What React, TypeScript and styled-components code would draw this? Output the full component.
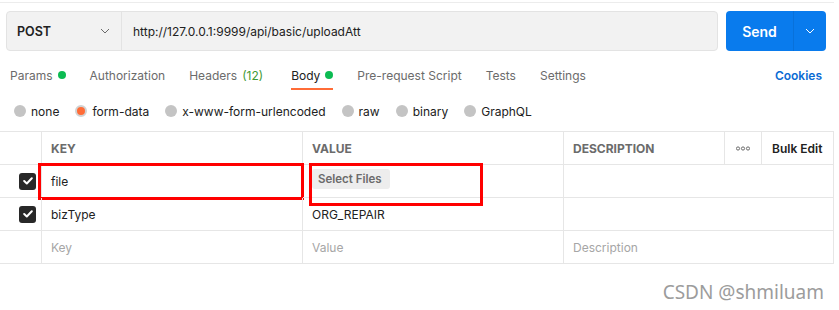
import React from 'react';
import styled, { createGlobalStyle } from 'styled-components';

const GlobalStyle = createGlobalStyle`
  body {
    margin: 0;
    background: #ffffff;
    font-family: Inter, "Noto Sans", sans-serif;
    font-size: 12px;
    color: #212121;
  }
`;

const Shell = styled.div`
  padding-top: 2px;
  width: 839px;
`;

const Panel = styled.div`
  width: 834px;
  border-top: 1px solid #ececec;
`;

const RequestBar = styled.div`
  display: flex;
  gap: 8px;
  padding: 8px 8px 0 6px;
`;

const UrlGroup = styled.div`
  flex: 1;
  display: flex;
  height: 40px;
  box-sizing: border-box;
  background: #f2f2f2;
  border: 1px solid #e3e3e3;
  border-radius: 4px;
`;

const MethodSelect = styled.div`
  width: 115px;
  box-sizing: border-box;
  display: flex;
  align-items: center;
  justify-content: space-between;
  padding: 0 11px 0 10px;
  border-right: 1px solid #e3e3e3;
  font-size: 12.5px;
  font-weight: 600;
  color: #212121;
`;

const UrlText = styled.div`
  display: flex;
  align-items: center;
  padding-left: 11px;
  color: #212121;
`;

const SendButton = styled.div`
  width: 100px;
  height: 40px;
  display: flex;
  background: #097bed;
  border-radius: 4px;
  color: #ffffff;
`;

const SendLabel = styled.div`
  width: 67px;
  display: flex;
  align-items: center;
  justify-content: center;
  font-size: 14px;
  font-weight: 600;
  border-right: 1px solid rgba(0, 0, 0, 0.08);
`;

const SendMore = styled.div`
  flex: 1;
  display: flex;
  align-items: center;
  justify-content: center;
`;

const TabRow = styled.div`
  display: flex;
  align-items: flex-end;
  margin-top: 12px;
  padding: 0 12px 0 10px;
`;

const Tab = styled.div<{ $active?: boolean; $gap?: number }>`
  display: flex;
  align-items: center;
  gap: 5px;
  height: 24px;
  padding-bottom: 1px;
  margin-right: ${({ $gap }) => $gap ?? 24}px;
  border-bottom: 2px solid ${({ $active }) => ($active ? '#ff6c37' : 'transparent')};
  color: ${({ $active }) => ($active ? '#212121' : '#6b6b6b')};
`;

const Count = styled.span`
  color: #3f9a36;
`;

const Dot = styled.span`
  width: 8px;
  height: 8px;
  border-radius: 50%;
  background: #0cbb52;
`;

const CookiesLink = styled.div`
  margin-left: auto;
  height: 24px;
  padding-bottom: 3px;
  display: flex;
  align-items: center;
  color: #0b6bd4;
  font-weight: 600;
`;

const RadioRow = styled.div`
  display: flex;
  align-items: center;
  height: 22px;
  margin-top: 10px;
  padding-left: 14px;
`;

const RadioOption = styled.label`
  display: flex;
  align-items: center;
  gap: 5px;
  margin-right: 16px;
  color: #212121;
`;

const RadioCircle = styled.span<{ $checked?: boolean }>`
  width: 12px;
  height: 12px;
  box-sizing: border-box;
  border-radius: 50%;
  background: ${({ $checked }) => ($checked ? '#ff6c37' : '#c4c4c4')};
  border: ${({ $checked }) => ($checked ? '2px solid #d2d2d2' : 'none')};
`;

const Table = styled.div`
  margin-top: 9px;
  display: grid;
  grid-template-columns: 42px 261px 261px 161px 37px 1fr;
  grid-auto-rows: 33px;
  border-top: 1px solid #e6e6e6;
`;

const Cell = styled.div<{ $span?: number }>`
  position: relative;
  display: flex;
  align-items: center;
  box-sizing: border-box;
  padding-left: 9px;
  grid-column: span ${({ $span }) => $span ?? 1};
  border-bottom: 1px solid #e6e6e6;
  border-right: 1px solid #e6e6e6;
  color: #212121;
`;

const HeadCell = styled(Cell)`
  font-weight: 700;
  color: #6b6b6b;
`;

const DotsCell = styled(HeadCell)`
  padding-left: 11px;
`;

const BulkCell = styled(Cell)`
  padding-left: 10px;
  font-weight: 600;
  color: #212121;
`;

const CheckCell = styled(Cell)`
  justify-content: flex-end;
  padding: 0 5px 0 0;
`;

const Checkbox = styled.span`
  width: 17px;
  height: 17px;
  border-radius: 3px;
  background: #282828;
  display: flex;
  align-items: center;
  justify-content: center;
`;

const Placeholder = styled.span`
  color: #a6a6a6;
`;

const FileButton = styled.span`
  display: inline-flex;
  align-items: center;
  height: 20px;
  padding: 0 8px 0 6px;
  margin-top: -4px;
  border-radius: 3px;
  background: #ededed;
  color: #6b6b6b;
  font-size: 11.5px;
  font-weight: 600;
`;

const RedMark = styled.span<{ $l: number; $t: number; $w: number; $h: number }>`
  position: absolute;
  left: ${({ $l }) => $l}px;
  top: ${({ $t }) => $t}px;
  width: ${({ $w }) => $w}px;
  height: ${({ $h }) => $h}px;
  box-sizing: border-box;
  border: 3px solid #ff0000;
  pointer-events: none;
`;

const Watermark = styled.div`
  display: flex;
  justify-content: flex-end;
  padding-right: 10px;
  margin-top: 15px;
  font-family: "Noto Sans", "DejaVu Sans", sans-serif;
  font-size: 19px;
  color: #9c9c9c;
`;

const Chevron = ({ color }: { color: string }) => (
  <svg width="10" height="6" viewBox="0 0 10 6" fill="none">
    <polyline points="1,1 5,5 9,1" stroke={color} strokeWidth="1" />
  </svg>
);

const Tick = () => (
  <svg width="10" height="8" viewBox="0 0 10 8" fill="none">
    <polyline points="1.2,4 3.8,6.5 8.8,1.3" stroke="#ffffff" strokeWidth="2" strokeLinecap="round" strokeLinejoin="round" />
  </svg>
);

const Dots = () => (
  <svg width="14" height="5" viewBox="0 0 14 5" fill="none">
    <circle cx="2" cy="2.5" r="1.6" stroke="#6b6b6b" strokeWidth="1" />
    <circle cx="7" cy="2.5" r="1.6" stroke="#6b6b6b" strokeWidth="1" />
    <circle cx="12" cy="2.5" r="1.6" stroke="#6b6b6b" strokeWidth="1" />
  </svg>
);

const bodyTypes = ['none', 'form-data', 'x-www-form-urlencoded', 'raw', 'binary', 'GraphQL'];

export default function App() {
  return (
    <Shell>
      <GlobalStyle />
      <Panel>
        <RequestBar>
          <UrlGroup>
            <MethodSelect>
              POST
              <Chevron color="#6b6b6b" />
            </MethodSelect>
            <UrlText>http://127.0.0.1:9999/api/basic/uploadAtt</UrlText>
          </UrlGroup>
          <SendButton>
            <SendLabel>Send</SendLabel>
            <SendMore>
              <Chevron color="#ffffff" />
            </SendMore>
          </SendButton>
        </RequestBar>

        <TabRow>
          <Tab $gap={24}>Params <Dot /></Tab>
          <Tab $gap={24}>Authorization</Tab>
          <Tab $gap={28}>Headers <Count>(12)</Count></Tab>
          <Tab $active $gap={24}>Body <Dot /></Tab>
          <Tab $gap={24}>Pre-request Script</Tab>
          <Tab $gap={24}>Tests</Tab>
          <Tab>Settings</Tab>
          <CookiesLink>Cookies</CookiesLink>
        </TabRow>

        <RadioRow>
          {bodyTypes.map((t) => (
            <RadioOption key={t}>
              <RadioCircle $checked={t === 'form-data'} />
              {t}
            </RadioOption>
          ))}
        </RadioRow>

        <Table>
          <HeadCell />
          <HeadCell>KEY</HeadCell>
          <HeadCell>VALUE</HeadCell>
          <HeadCell>DESCRIPTION</HeadCell>
          <DotsCell><Dots /></DotsCell>
          <BulkCell>Bulk Edit</BulkCell>

          <CheckCell><Checkbox><Tick /></Checkbox></CheckCell>
          <Cell>
            file
            <RedMark $l={-4} $t={-2} $w={266} $h={37} />
          </Cell>
          <Cell>
            <FileButton>Select Files</FileButton>
            <RedMark $l={6} $t={-2} $w={174} $h={43} />
          </Cell>
          <Cell $span={3} />

          <CheckCell><Checkbox><Tick /></Checkbox></CheckCell>
          <Cell>bizType</Cell>
          <Cell>ORG_REPAIR</Cell>
          <Cell $span={3} />

          <Cell />
          <Cell><Placeholder>Key</Placeholder></Cell>
          <Cell><Placeholder>Value</Placeholder></Cell>
          <Cell $span={3}><Placeholder>Description</Placeholder></Cell>
        </Table>

        <Watermark>CSDN @shmiluam</Watermark>
      </Panel>
    </Shell>
  );
}
